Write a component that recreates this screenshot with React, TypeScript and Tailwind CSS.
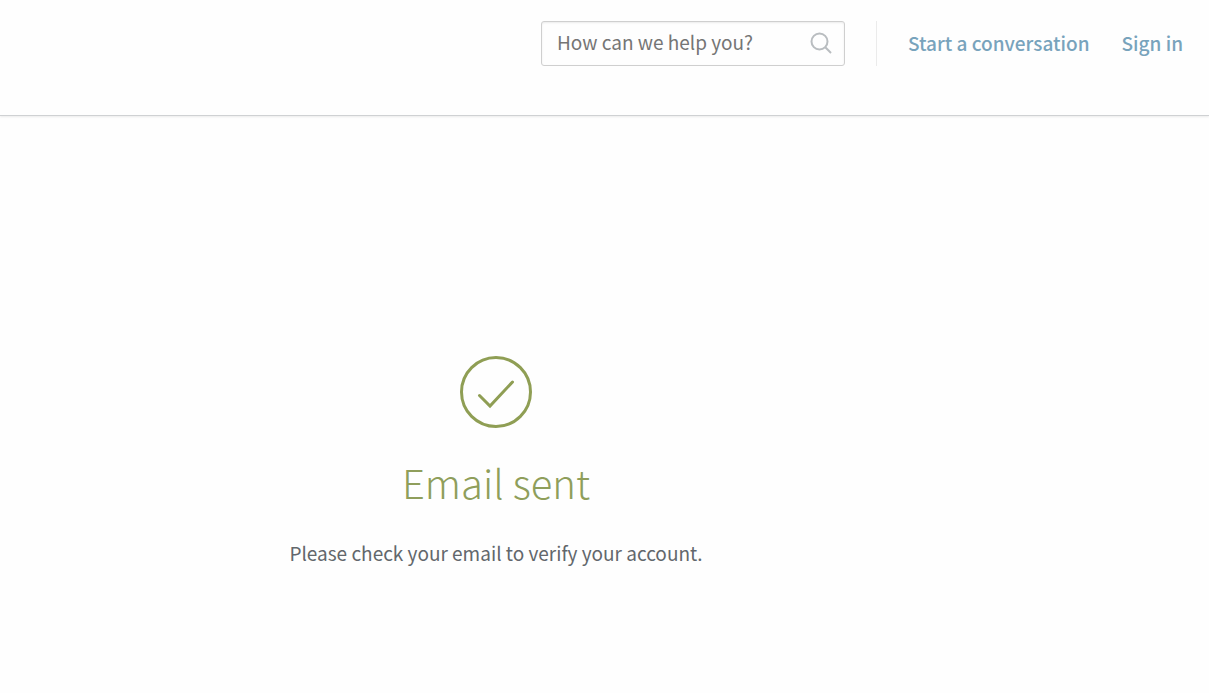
export default function App() {
  return (
    <div className="min-h-screen bg-[#fefefe] font-['Noto_Sans_CJK_SC','Noto_Sans',sans-serif] text-[19px] text-[#62676c]">
      <header className="flex h-29 items-start justify-end border-b border-[#cfd1d3] pt-[21px] pr-[26px] shadow-[0_1px_2px_rgba(0,0,0,0.08)]">
        <form role="search" className="flex h-[45px] w-[304px] items-center rounded-[3px] border border-[#cfcfcf] pr-3 pb-0.5 pl-[15px] shadow-[inset_0_1px_2px_rgba(0,0,0,0.08)]">
          <input
            type="search"
            aria-label="Search"
            placeholder="How can we help you?"
            className="min-w-0 flex-1 bg-transparent text-[19px] text-[#666] outline-none placeholder:text-[#757575]"
          />
          <button type="submit" aria-label="Submit search">
            <svg className="block size-[22px]" viewBox="0 0 22 22" fill="none" stroke="#b9bdc0" strokeWidth="2">
              <circle cx="9.5" cy="9.5" r="8" />
              <path d="M15.3 15.3 21 21" />
            </svg>
          </button>
        </form>
        <nav className="ml-[31px] flex h-[45px] items-center gap-8 border-l border-[#ebebeb] pl-[31px] font-medium text-[#78a3bc]">
          <a href="#conversation">Start a conversation</a>
          <a href="#sign-in">Sign in</a>
        </nav>
      </header>
      <main className="flex flex-col items-center pt-60 pr-[217px]">
        <svg className="size-18" viewBox="0 0 72 72" fill="none" stroke="#8f9e54" strokeWidth="3">
          <circle cx="36" cy="36" r="34.5" />
          <path d="M19.5 39.5 30 50 52.5 26" strokeLinecap="round" />
        </svg>
        <h1 className="mt-6 text-[40px] leading-15 font-light text-[#8f9e5b]">Email sent</h1>
        <p className="mt-6 leading-[34px]">Please check your email to verify your account.</p>
      </main>
    </div>
  );
}
